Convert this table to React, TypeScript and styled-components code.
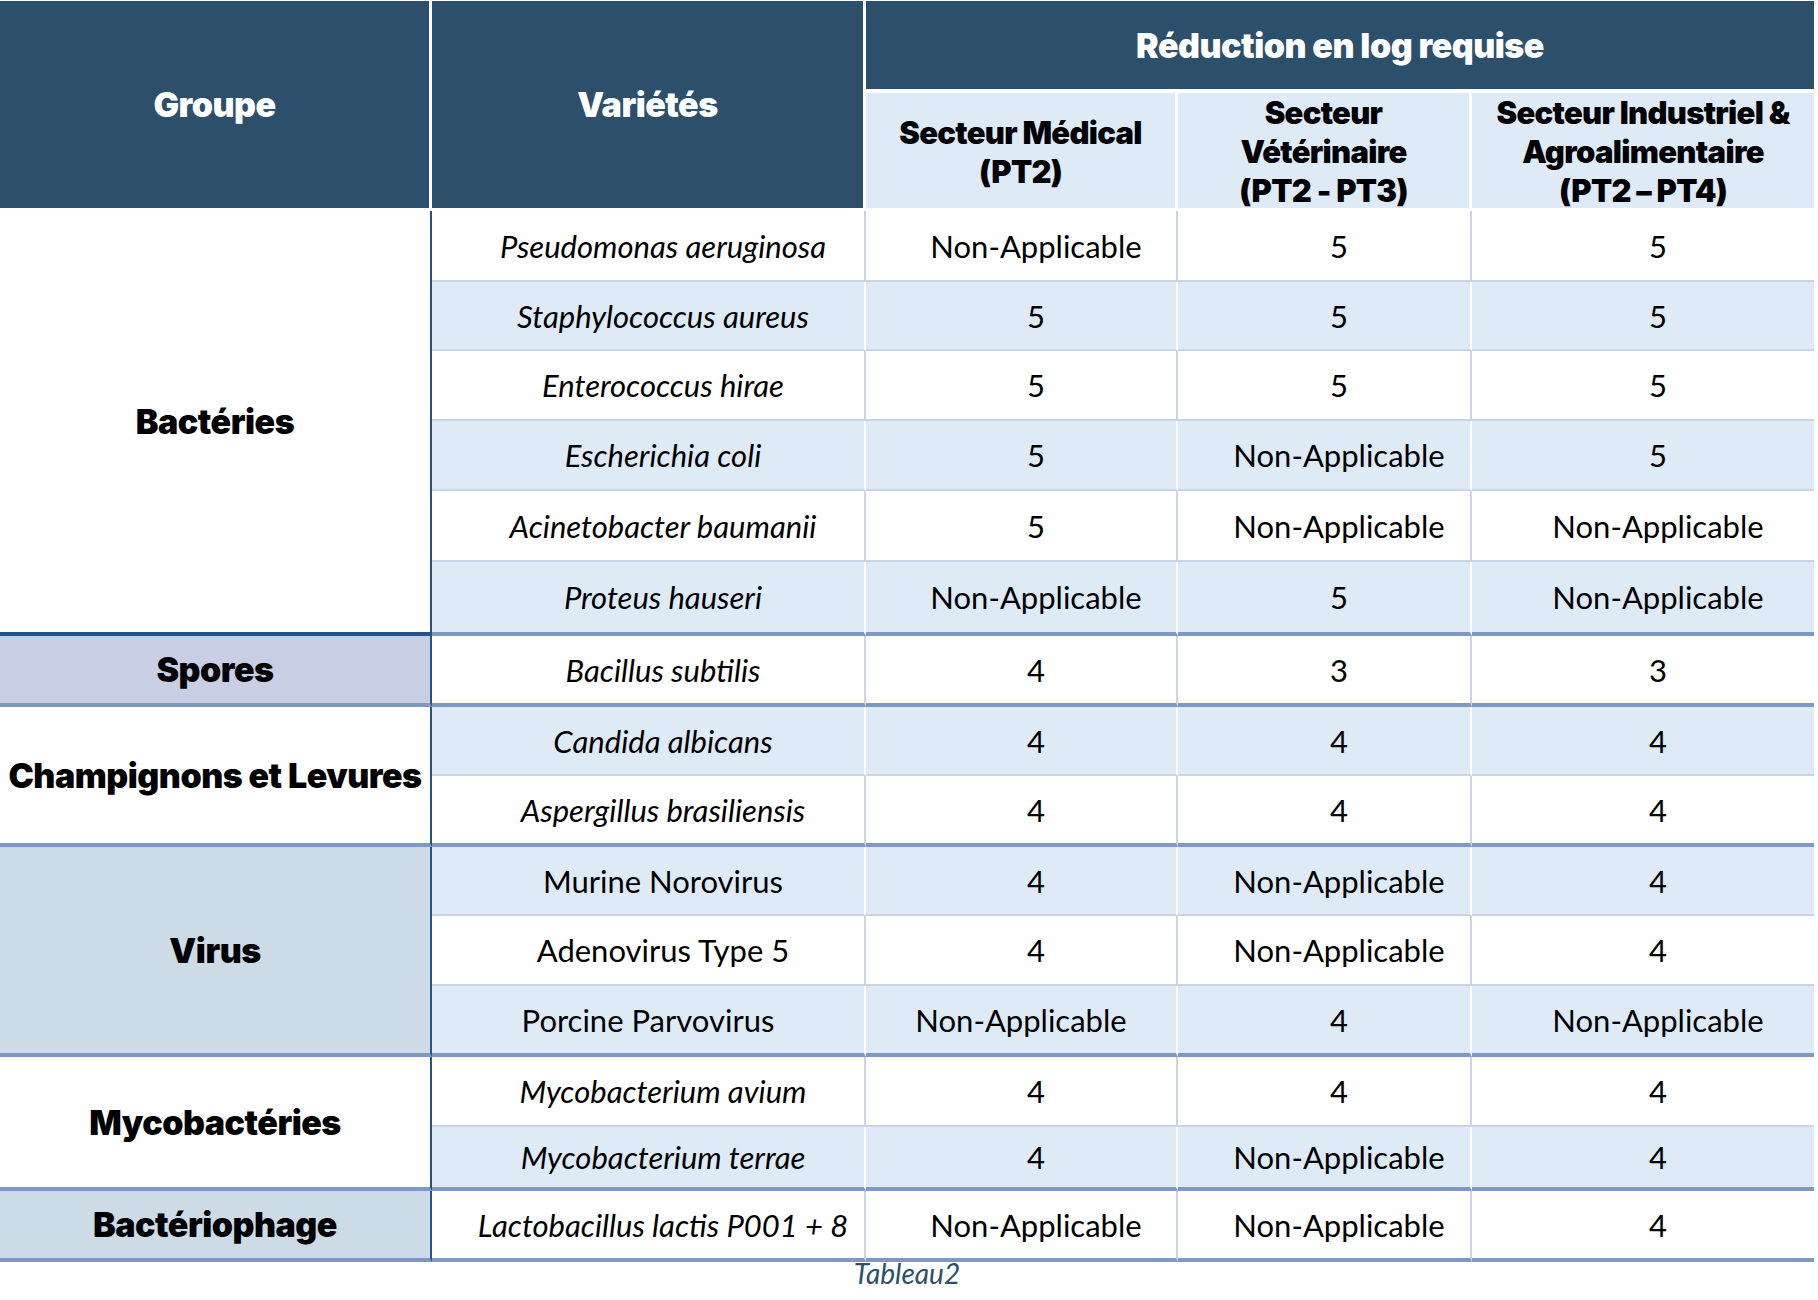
import React from 'react'
import styled, { createGlobalStyle } from 'styled-components'

const GlobalStyle = createGlobalStyle`
  html, body {
    margin: 0;
    padding: 0;
    background: #ffffff;
  }
  body {
    font-family: Lato, "Open Sans", sans-serif;
    color: #000000;
  }
`

const navy = '#2c4f6b'
const paleBlue = '#deebf7'
const hairline = '#ccd3e8'
const groupRule = '#7f98bf'
const deepRule = '#24528a'
const heavyFont = 'Inter, "Open Sans", sans-serif'

type Row = {
  cells: string[]
  h: number
  upright?: boolean
  flush?: number[]
}

type Group = {
  label: string
  bg: string
  rule?: string
  rows: Row[]
}

const groups: Group[] = [
  {
    label: 'Bactéries',
    bg: '#ffffff',
    rule: deepRule,
    rows: [
      { cells: ['Pseudomonas aeruginosa', 'Non-Applicable', '5', '5'], h: 69 },
      { cells: ['Staphylococcus aureus', '5', '5', '5'], h: 67 },
      { cells: ['Enterococcus hirae', '5', '5', '5'], h: 68 },
      { cells: ['Escherichia coli', '5', 'Non-Applicable', '5'], h: 68 },
      { cells: ['Acinetobacter baumanii', '5', 'Non-Applicable', 'Non-Applicable'], h: 69 },
      { cells: ['Proteus hauseri', 'Non-Applicable', '5', 'Non-Applicable'], h: 70 },
    ],
  },
  {
    label: 'Spores',
    bg: '#c8cee3',
    rows: [{ cells: ['Bacillus subtilis', '4', '3', '3'], h: 67 }],
  },
  {
    label: 'Champignons et Levures',
    bg: '#ffffff',
    rows: [
      { cells: ['Candida albicans', '4', '4', '4'], h: 67 },
      { cells: ['Aspergillus brasiliensis', '4', '4', '4'], h: 67 },
    ],
  },
  {
    label: 'Virus',
    bg: '#ccdbe6',
    rows: [
      { cells: ['Murine Norovirus', '4', 'Non-Applicable', '4'], h: 67, upright: true },
      { cells: ['Adenovirus Type 5', '4', 'Non-Applicable', '4'], h: 68, upright: true },
      { cells: ['Porcine Parvovirus', 'Non-Applicable', '4', 'Non-Applicable'], h: 67, upright: true, flush: [0, 1] },
    ],
  },
  {
    label: 'Mycobactéries',
    bg: '#ffffff',
    rows: [
      { cells: ['Mycobacterium avium', '4', '4', '4'], h: 68 },
      { cells: ['Mycobacterium terrae', '4', 'Non-Applicable', '4'], h: 60 },
    ],
  },
  {
    label: 'Bactériophage',
    bg: '#ccdbe6',
    rows: [{ cells: ['Lactobacillus lactis P001 + 8', 'Non-Applicable', 'Non-Applicable', '4'], h: 67 }],
  },
]

const Sheet = styled.div`
  width: 1814px;
  padding-top: 1px;
`

const Grid = styled.div`
  display: grid;
  grid-template-columns: 432px 434px 312px 294px 342px;
`

const Heading = styled.div<{ $rows?: number; $cols?: number; $sub?: boolean; $gapRight?: boolean; $gapBottom: number }>`
  box-sizing: border-box;
  grid-row: span ${p => p.$rows ?? 1};
  grid-column: span ${p => p.$cols ?? 1};
  height: ${p => (p.$rows === 2 ? 210 : p.$sub ? 118 : 92)}px;
  background: ${p => (p.$sub ? paleBlue : navy)};
  color: ${p => (p.$sub ? '#000000' : '#ffffff')};
  border-right: ${p => (p.$gapRight ? '3px solid #ffffff' : 'none')};
  border-bottom: ${p => p.$gapBottom}px solid #ffffff;
  display: flex;
  align-items: center;
  justify-content: center;
  text-align: center;
  font-family: ${heavyFont};
  font-weight: 900;
  font-size: ${p => (p.$sub ? 31 : 34)}px;
  line-height: 39px;
  letter-spacing: ${p => (p.$sub ? -0.7 : -0.5)}px;
  padding-top: ${p => (p.$sub ? 2 : 0)}px;
`

const GroupCell = styled.div<{ $rows: number; $bg: string; $rule: string }>`
  box-sizing: border-box;
  grid-row: span ${p => p.$rows};
  background: ${p => p.$bg};
  border-right: 2px solid ${deepRule};
  border-bottom: 4px solid ${p => p.$rule};
  display: flex;
  align-items: center;
  justify-content: center;
  font-family: ${heavyFont};
  font-weight: 900;
  font-size: 34px;
  letter-spacing: -0.5px;
  white-space: nowrap;
`

const Cell = styled.div<{ $h: number; $light: boolean; $end: boolean; $last: boolean; $flush: boolean; $italic: boolean }>`
  box-sizing: border-box;
  height: ${p => p.$h + (p.$end ? 4 : 2)}px;
  background: ${p => (p.$light ? paleBlue : '#ffffff')};
  border-right: ${p => (p.$last ? 'none' : `2px solid ${p.$light ? '#ffffff' : hairline}`)};
  border-bottom: ${p => (p.$end ? `4px solid ${groupRule}` : `2px solid ${hairline}`)};
  display: flex;
  align-items: center;
  justify-content: center;
  padding-left: ${p => (p.$flush ? 0 : 30)}px;
  font-size: 31px;
  font-style: ${p => (p.$italic ? 'italic' : 'normal')};
  white-space: nowrap;
`

const Caption = styled.p`
  margin: -4px 0 0;
  text-align: center;
  font-style: italic;
  font-size: 28px;
  line-height: 30px;
  color: ${navy};
`

export default function App() {
  let index = 0
  return (
    <Sheet>
      <GlobalStyle />
      <Grid>
        <Heading $rows={2} $gapRight $gapBottom={3}>Groupe</Heading>
        <Heading $rows={2} $gapRight $gapBottom={3}>Variétés</Heading>
        <Heading $cols={3} $gapBottom={4}>Réduction en log requise</Heading>
        <Heading $sub $gapRight $gapBottom={3}>Secteur Médical<br />(PT2)</Heading>
        <Heading $sub $gapRight $gapBottom={3}>Secteur<br />Vétérinaire<br />(PT2 - PT3)</Heading>
        <Heading $sub $gapBottom={3}>Secteur Industriel &amp;<br />Agroalimentaire<br />(PT2 – PT4)</Heading>

        {groups.map(group =>
          group.rows.map((row, r) => {
            const light = index % 2 === 1
            index += 1
            const end = r === group.rows.length - 1
            return (
              <React.Fragment key={row.cells[0]}>
                {r === 0 && (
                  <GroupCell $rows={group.rows.length} $bg={group.bg} $rule={group.rule ?? groupRule}>
                    {group.label}
                  </GroupCell>
                )}
                {row.cells.map((text, c) => (
                  <Cell
                    key={c}
                    $h={row.h}
                    $light={light}
                    $end={end}
                    $last={c === 3}
                    $flush={row.flush?.includes(c) ?? false}
                    $italic={c === 0 && !row.upright}
                  >
                    {text}
                  </Cell>
                ))}
              </React.Fragment>
            )
          })
        )}
      </Grid>
      <Caption>Tableau2</Caption>
    </Sheet>
  )
}
